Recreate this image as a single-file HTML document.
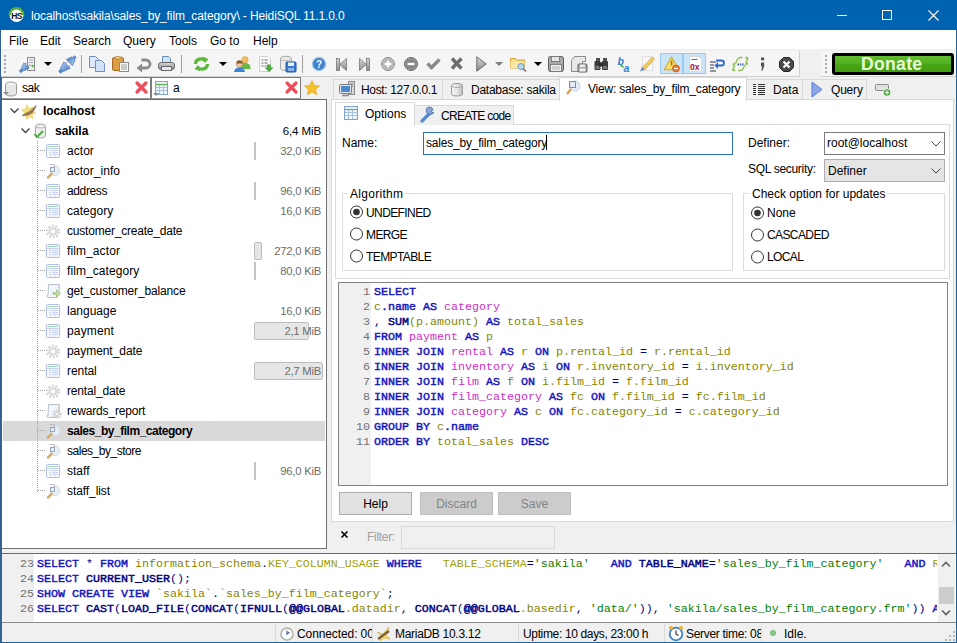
<!DOCTYPE html><html><head><meta charset="utf-8"><style>
*{box-sizing:border-box;margin:0;padding:0}
html,body{width:957px;height:643px;overflow:hidden;background:#f0f0f0;font-family:"Liberation Sans",sans-serif;font-size:12px;color:#000}
.a{position:absolute}
.t{position:absolute;white-space:nowrap;line-height:14px}
svg{position:absolute;overflow:visible}
.m{font-family:"Liberation Mono",monospace;font-size:11.67px;line-height:15px;white-space:pre;position:absolute}
.kw{color:#1414c0;font-weight:normal;-webkit-text-stroke:0.45px #1414c0}
.id{color:#858500}
.tb{color:#d22cc8}
.st{color:#008000}
.fn{color:#000080;font-weight:normal;-webkit-text-stroke:0.45px #000080}
.sy{color:#000080}
.id2{color:#a0a000}

</style></head><body>
<div class="a" style="left:0;top:0;width:957px;height:30px;background:#0063b1"></div>
<svg style="left:9px;top:7px" width="16" height="16"><circle cx="7.5" cy="8" r="7" fill="#fff"/><path d="M0.8 8a6.7 6.7 0 0 1 13.4 0" fill="none" stroke="#5cb030" stroke-width="2.4"/><circle cx="7.5" cy="8.8" r="5.2" fill="#fff"/><text x="7.6" y="11.8" font-family="Liberation Sans" font-weight="bold" font-size="8.5" text-anchor="middle" fill="#111" letter-spacing="-0.6">HS</text></svg>
<div class="t" style="left:31px;top:9px;color:#fff;font-size:12px;letter-spacing:-0.12px">localhost\sakila\sales_by_film_category\ - HeidiSQL 11.1.0.0</div>
<div class="a" style="left:837px;top:15px;width:10px;height:1px;background:#fff"></div>
<div class="a" style="left:882px;top:10px;width:10px;height:10px;border:1px solid #fff"></div>
<svg style="left:928px;top:10px" width="11" height="11"><path d="M0.5 0.5L10.5 10.5M10.5 0.5L0.5 10.5" stroke="#fff" stroke-width="1.1"/></svg>
<div class="a" style="left:0;top:30px;width:1px;height:613px;background:#2f6090;z-index:5"></div><div class="a" style="left:1px;top:77px;width:1px;height:566px;background:#3a6a92;z-index:5"></div>
<div class="a" style="left:956px;top:30px;width:1px;height:613px;background:#1f5f98;z-index:5"></div>
<div class="a" style="left:1px;top:30px;width:955px;height:19px;background:#fff"></div>
<div class="t" style="left:9px;top:34px">File</div>
<div class="t" style="left:40px;top:34px">Edit</div>
<div class="t" style="left:73px;top:34px">Search</div>
<div class="t" style="left:123px;top:34px">Query</div>
<div class="t" style="left:169px;top:34px">Tools</div>
<div class="t" style="left:210px;top:34px">Go to</div>
<div class="t" style="left:253px;top:34px">Help</div>
<div class="a" style="left:1px;top:49px;width:955px;height:2px;background:#f0f0f0"></div>
<div class="a" style="left:1px;top:51px;width:799px;height:26px;background:#f5f5f5;border-right:1px solid #d0d0d0;border-bottom:1px solid #d0d0d0"></div>
<div class="a" style="left:821px;top:51px;width:135px;height:26px;background:#f5f5f5;border-bottom:1px solid #d0d0d0"></div>
<div class="a" style="left:4px;top:55px;width:2px;height:2px;background:#a8a8a8"></div>
<div class="a" style="left:4px;top:59px;width:2px;height:2px;background:#a8a8a8"></div>
<div class="a" style="left:4px;top:63px;width:2px;height:2px;background:#a8a8a8"></div>
<div class="a" style="left:4px;top:67px;width:2px;height:2px;background:#a8a8a8"></div>
<div class="a" style="left:4px;top:71px;width:2px;height:2px;background:#a8a8a8"></div>
<div class="a" style="left:825px;top:55px;width:2px;height:2px;background:#a8a8a8"></div>
<div class="a" style="left:825px;top:59px;width:2px;height:2px;background:#a8a8a8"></div>
<div class="a" style="left:825px;top:63px;width:2px;height:2px;background:#a8a8a8"></div>
<div class="a" style="left:825px;top:67px;width:2px;height:2px;background:#a8a8a8"></div>
<div class="a" style="left:825px;top:71px;width:2px;height:2px;background:#a8a8a8"></div>
<div class="a" style="left:81px;top:55px;width:1px;height:18px;background:#a0a0a0"></div>
<div class="a" style="left:181px;top:55px;width:1px;height:18px;background:#a0a0a0"></div>
<div class="a" style="left:302px;top:55px;width:1px;height:18px;background:#a0a0a0"></div>
<svg style="left:0;top:0" width="0" height="0"><defs><linearGradient id="plg" x1="0" y1="0" x2="0" y2="1"><stop offset="0" stop-color="#a9c8f0"/><stop offset="1" stop-color="#4f82c8"/></linearGradient><linearGradient id="gry" x1="0" y1="0" x2="0" y2="1"><stop offset="0" stop-color="#d8d8d8"/><stop offset="1" stop-color="#8a8a8a"/></linearGradient><linearGradient id="grn" x1="0" y1="0" x2="0" y2="1"><stop offset="0" stop-color="#9ad56a"/><stop offset="1" stop-color="#3f9a2a"/></linearGradient></defs></svg>
<svg style="left:14px;top:56px" width="22" height="16"><rect x="13.5" y="1.5" width="7" height="13" fill="#f4f4f4" stroke="#8a8a8a"/><path d="M15 4h4M15 6.5h4M15 9h2" stroke="#8a9aaa" stroke-width="0.9"/><circle cx="18.5" cy="10" r="1.2" fill="#52b043"/><g transform="translate(10.5 11.5) rotate(-45) scale(0.85)"><rect x="-7.5" y="-1.6" width="4.5" height="3.2" rx="1" fill="#5a8ad0" stroke="#3a64a8" stroke-width="0.5"/><path d="M-3.5 -2.2L3.5 -4.4V4.4L-3.5 2.2z" fill="url(#plg)" stroke="#3f6fb8" stroke-width="0.6"/><rect x="3.5" y="-3" width="2" height="1.6" fill="#999"/><rect x="3.5" y="1.4" width="2" height="1.6" fill="#999"/></g></svg>
<svg style="left:44px;top:62px" width="8" height="5"><path d="M0 0H8L4 4Z" fill="#000"/></svg>
<svg style="left:56px;top:56px" width="22" height="16"><g transform="translate(8.5 11.5) rotate(-45)"><rect x="-7" y="-1.6" width="4" height="3.2" rx="1" fill="#5a8ad0" stroke="#3a64a8" stroke-width="0.5"/><path d="M-3.5 -2.2L3.5 -4.6V4.6L-3.5 2.2z" fill="url(#plg)" stroke="#3f6fb8" stroke-width="0.6"/><rect x="3.5" y="-3" width="1.8" height="1.6" fill="#aaa"/><rect x="3.5" y="1.4" width="1.8" height="1.6" fill="#aaa"/></g><g transform="translate(15.5 4.5) rotate(135)"><path d="M-3 -2.2L3 -4.4V4.4L-3 2.2z" fill="url(#plg)" stroke="#3f6fb8" stroke-width="0.6"/><rect x="-6" y="-1.6" width="3" height="3.2" rx="1" fill="#5a8ad0"/></g></svg>
<svg style="left:89px;top:56px" width="18" height="16"><path d="M0.5 0.5h6l3 3v8h-9z" fill="#dce9fa" stroke="#6e90c0"/><path d="M6.5 4.5h6l3 3v8h-9z" fill="#d2e3f8" stroke="#6e90c0"/></svg>
<svg style="left:112px;top:56px" width="18" height="16"><rect x="0.5" y="1.5" width="11" height="13" rx="1.5" fill="#dd9d45" stroke="#a86b22"/><rect x="3" y="0.5" width="6" height="2.5" rx="1" fill="#f5d070" stroke="#a07030" stroke-width="0.6"/><rect x="7.5" y="6.5" width="9" height="9" fill="#f6f6f6" stroke="#8a8a8a"/><path d="M9 9h6M9 11h6M9 13h6" stroke="#a0a0a0"/></svg>
<svg style="left:136px;top:56px" width="16" height="16"><path d="M5.5 4h4.5a4 4 0 0 1 0 8H5" fill="none" stroke="#8a8a8a" stroke-width="2.8"/><path d="M0.5 12l5.5-4.5v9z" fill="#8a8a8a"/></svg>
<svg style="left:158px;top:56px" width="18" height="16"><path d="M4.5 0.5h6l2 2v4h-8z" fill="#cfe2f7" stroke="#6a8db5"/><rect x="0.5" y="6.5" width="16" height="7" rx="2.5" fill="url(#gry)" stroke="#6a6a6a"/><rect x="3.5" y="10.5" width="10" height="4" fill="#dfe8f2" stroke="#6a6a6a"/></svg>
<svg style="left:193px;top:56px" width="18" height="16"><path d="M2.5 8a5.5 5 0 0 1 10-3" fill="none" stroke="#5cb83a" stroke-width="3.2"/><path d="M14.5 8a5.5 5 0 0 1-10 3" fill="none" stroke="#5cb83a" stroke-width="3.2"/><path d="M9.5 0.5l6 2.5-3.5 4z M7.5 15.5l-6-2.5 3.5-4z" fill="#5cb83a"/></svg>
<svg style="left:219px;top:62px" width="8" height="5"><path d="M0 0H8L4 4Z" fill="#000"/></svg>
<svg style="left:234px;top:56px" width="18" height="16"><circle cx="11" cy="3.8" r="3.2" fill="#f0c060" stroke="#c9943a" stroke-width="0.5"/><path d="M5.5 11.5a5.5 4.5 0 0 1 11 0v1.5h-11z" fill="#62b843"/><circle cx="5.5" cy="8.2" r="3.2" fill="#f0c8a0" stroke="#9a6a3a" stroke-width="0.5"/><path d="M2.3 7.5a3.2 3.2 0 0 1 6.4 0z" fill="#8a5a30"/><path d="M0 16a5.5 4.5 0 0 1 11 0z" fill="#3f86d8"/></svg>
<svg style="left:259px;top:56px" width="17" height="16"><path d="M0.5 0.5h8l3 3v12h-11z" fill="#fafafa" stroke="#d0d0d0"/><path d="M2.5 4h2M5.5 4h3M2.5 7h2M5.5 7h3M2.5 10h2M5.5 10h2" stroke="#606870"/><path d="M8 8.5h4v3h2.5l-4.5 4.5-4.5-4.5h2.5z" fill="#4aa83c"/></svg>
<svg style="left:280px;top:56px" width="17" height="16"><path d="M0.5 2.5a5.5 2.2 0 0 1 11 0v10a5.5 2.2 0 0 1-11 0z" fill="#ececec" stroke="#a8a8a8"/><path d="M0.5 2.5a5.5 2.2 0 0 0 11 0" fill="none" stroke="#b8b8b8"/><rect x="6" y="6" width="10" height="10" rx="1" fill="#3a7cd0" stroke="#1f559f"/><rect x="8" y="6.5" width="6" height="3.5" fill="#e8f0fa"/><rect x="8" y="12" width="6" height="3" fill="#8ab8e8"/></svg>
<svg style="left:312px;top:57px" width="16" height="16"><circle cx="7" cy="7" r="6.6" fill="#4a88d0" stroke="#9cc0ea" stroke-width="1.2"/><circle cx="7" cy="7" r="5.3" fill="#3f7fc8"/><text x="7" y="10.8" font-family="Liberation Sans" font-weight="bold" font-size="10" text-anchor="middle" fill="#fff">?</text></svg>
<svg style="left:336px;top:57px" width="16" height="16"><rect x="0.5" y="1.5" width="3" height="12" fill="url(#gry)" stroke="#6a6a6a" stroke-width="0.7"/><path d="M10.5 1.5v12L3.5 7.5z" fill="url(#gry)" stroke="#6a6a6a" stroke-width="0.7"/></svg>
<svg style="left:359px;top:57px" width="16" height="16"><rect x="7.5" y="1.5" width="3" height="12" fill="url(#gry)" stroke="#6a6a6a" stroke-width="0.7"/><path d="M0.5 1.5v12L7.5 7.5z" fill="url(#gry)" stroke="#6a6a6a" stroke-width="0.7"/></svg>
<svg style="left:381px;top:57px" width="16" height="16"><circle cx="7" cy="7" r="6.5" fill="#c8c8c8" stroke="#8a8a8a"/><circle cx="7" cy="7" r="5" fill="#b0b0b0"/><path d="M7 3.5v7M3.5 7h7" stroke="#fff" stroke-width="2.4"/></svg>
<svg style="left:404px;top:57px" width="16" height="16"><circle cx="7" cy="7" r="6.5" fill="#9a9a9a" stroke="#6a6a6a"/><circle cx="7" cy="7" r="5" fill="#858585"/><path d="M3.5 7h7" stroke="#fff" stroke-width="2.4"/></svg>
<svg style="left:426px;top:57px" width="16" height="16"><path d="M1.5 6.5l4 4 8-8" fill="none" stroke="#8a8a8a" stroke-width="3.4"/></svg>
<svg style="left:450px;top:57px" width="16" height="16"><path d="M2 1.5l9.5 10M11.5 1.5L2 11.5" stroke="#6e6e6e" stroke-width="3.4"/></svg>
<svg style="left:476px;top:56px" width="16" height="16"><path d="M0.8 0.8v14.4L10.2 8z" fill="url(#gry)" stroke="#5a5a5a" stroke-width="0.9"/></svg>
<svg style="left:495px;top:62px" width="8" height="5"><path d="M0 0H8L4 4Z" fill="#7a7a7a"/></svg>
<svg style="left:510px;top:56px" width="17" height="16"><path d="M0.5 2.5h5l1.5 1.5h7.5v8h-14z" fill="#f9db82" stroke="#d2a23a"/><path d="M0.5 5.5h14v6.5h-14z" fill="#fbe7a8"/><circle cx="11" cy="10.5" r="3" fill="#b8d8f4" stroke="#6a9ac8"/><path d="M13 12.5l3 3" stroke="#6a6a6a" stroke-width="1.4"/></svg>
<svg style="left:534px;top:62px" width="8" height="5"><path d="M0 0H8L4 4Z" fill="#000"/></svg>
<svg style="left:548px;top:56px" width="16" height="16"><rect x="0.5" y="0.5" width="15" height="15" rx="2" fill="#a8a8a8" stroke="#5f5f5f"/><rect x="3.5" y="0.5" width="8" height="5" fill="#e6e6e6" stroke="#6f6f6f" stroke-width="0.8"/><rect x="2.5" y="8.5" width="11" height="7" fill="#f0f0f0" stroke="#6f6f6f" stroke-width="0.8"/><path d="M4 11h8M4 13h8" stroke="#b0b0b0"/></svg>
<svg style="left:571px;top:56px" width="17" height="16"><path d="M3.5 0.5h11v5h-3v10h-11v-11z" fill="#e8e8e8" stroke="#8a8a8a"/><rect x="7" y="8" width="9" height="8" rx="1" fill="#a8a8a8" stroke="#5f5f5f"/><rect x="9" y="8.5" width="5" height="2.5" fill="#eee"/><rect x="8.5" y="12.5" width="6" height="3" fill="#eee"/></svg>
<svg style="left:594px;top:56px" width="16" height="16"><rect x="2" y="2" width="4" height="4" fill="#505050"/><rect x="9" y="2" width="4" height="4" fill="#505050"/><rect x="0.5" y="5" width="6" height="9" rx="1" fill="#3a3a3a"/><rect x="8" y="5" width="6" height="9" rx="1" fill="#3a3a3a"/><rect x="5" y="6.5" width="4" height="4" fill="#2a2a2a"/><rect x="1.5" y="10" width="4" height="3" fill="#777"/><rect x="9" y="10" width="4" height="3" fill="#777"/></svg>
<svg style="left:617px;top:56px" width="17" height="16"><text x="0.5" y="8.5" font-family="Liberation Sans" font-style="italic" font-weight="bold" font-size="10.5" fill="#2a80e0">b</text><text x="6.5" y="15.5" font-family="Liberation Sans" font-style="italic" font-weight="bold" font-size="10.5" fill="#2a80e0">a</text><path d="M3 8.5l3.5 3" stroke="#4aa83c" stroke-width="1.6"/></svg>
<svg style="left:639px;top:56px" width="17" height="16"><rect x="3.5" y="0.5" width="10" height="14" fill="#f8f8f8" stroke="#e0e0e0"/><path d="M1 15.5l2-4.5 3 2.5z" fill="#5a8ad0"/><path d="M3.5 11l10-10 2 2-9.5 10.5z" fill="#f2ca5a" stroke="#c8982a" stroke-width="0.6"/></svg>
<div class="a" style="left:660px;top:53px;width:23px;height:21px;background:#cce4f7;border:1px solid #99c9ef"></div>
<div class="a" style="left:683px;top:53px;width:23px;height:21px;background:#cce4f7;border:1px solid #99c9ef"></div>
<svg style="left:664px;top:56px" width="17" height="17"><path d="M7.5 0.8L14.8 13.8H0.2z" fill="#f8dc6a" stroke="#c9a02a" stroke-linejoin="round"/><rect x="6.8" y="4.5" width="1.6" height="5" fill="#a07810"/><circle cx="12" cy="12.5" r="3.5" fill="#e8732a" stroke="#c45010" stroke-width="0.6"/><path d="M10 12.5h4" stroke="#fff" stroke-width="1.3"/></svg>
<svg style="left:689px;top:56px" width="16" height="16"><path d="M0.5 0.5h9l3 3v12h-12z" fill="#fff" stroke="#d8d8d8"/><path d="M2.5 3.5h6" stroke="#c04060"/><text x="1" y="14" font-family="Liberation Sans" font-weight="bold" font-size="8.5" fill="#a01040">0x</text></svg>
<svg style="left:710px;top:56px" width="15" height="16"><path d="M0 6h6M0 9h4M0 12h4M0 15h6" stroke="#303a48" stroke-width="1.2"/><path d="M6 9.5h5.5a2.5 2.5 0 0 0 0-5H6" fill="none" stroke="#2a6ac8" stroke-width="1.8"/><path d="M4.5 9.5l3.5-3.5v7z" fill="#2a6ac8"/></svg>
<svg style="left:732px;top:56px" width="18" height="16"><g transform="translate(3 0) skewX(-25)"><path d="M8 1.5H6Q4 1.5 4 4V6.5L2 8 4 9.5V12Q4 14.5 6 14.5H7M11 1.5H12Q14 1.5 14 4V6.5L16 8 14 9.5V12Q14 14.5 12 14.5H10" fill="none" stroke="#8cc24a" stroke-width="1.5"/></g><path d="M5.5 8.5h6" stroke="#4a6ab0" stroke-width="1.8" stroke-dasharray="1.5 0.8"/></svg>
<svg style="left:758px;top:56px" width="16" height="16"><rect x="3" y="1.5" width="3.2" height="2.8" fill="#555"/><path d="M3 6.5h3.2v3.5l-1.6 4.5h-1.4l1-4H3z" fill="#555"/></svg>
<svg style="left:779px;top:57px" width="16" height="16"><path d="M4.5 0.5h6l4 4v6l-4 4h-6l-4-4v-6z" fill="#4a4a4a" stroke="#2a2a2a"/><path d="M4.5 4.5l6 6M10.5 4.5l-6 6" stroke="#fff" stroke-width="2.2"/></svg>
<div class="a" style="left:832px;top:53px;width:122px;height:22px;border-radius:3px;background:#000"></div>
<div class="a" style="left:835px;top:56px;width:116px;height:16px;background:linear-gradient(#62bc30 0,#55b022 45%,#47a514 55%,#429f10 100%)"></div>
<div class="t" style="left:861px;top:55px;font-size:17.6px;line-height:18px;font-weight:bold;letter-spacing:0.3px;color:#eafcd4">Donate</div>
<div class="a" style="left:1px;top:77px;width:150px;height:22px;background:#fff;border:1px solid #7a7a7a;border-bottom-color:#9a9a9a"></div>
<div class="a" style="left:151px;top:77px;width:150px;height:22px;background:#fff;border:1px solid #7a7a7a;border-bottom-color:#9a9a9a"></div>
<svg style="left:3px;top:81px" width="16" height="16"><ellipse cx="8" cy="3.5" rx="5.5" ry="2.5" fill="#f4f4f4" stroke="#9a9a9a"/><path d="M2.5 3.5v9a5.5 2.5 0 0 0 11 0v-9" fill="#e6e6e6" stroke="#9a9a9a"/><path d="M0 11l3 3 3-3z" fill="#8a8a8a"/></svg>
<svg style="left:153px;top:81px" width="16" height="16"><rect x="2.5" y="0.5" width="12" height="13" fill="#eef4fb" stroke="#7fa3cf"/><path d="M2.5 3.5h12" stroke="#6cb055" stroke-width="1.4"/><path d="M3 6.5h11M3 9.5h11M6.5 4v9M10.5 4v9" stroke="#a8c2e2"/><path d="M0 12l3 3 3-3z" fill="#8a8a8a"/></svg>
<svg style="left:135px;top:81px" width="13" height="13"><path d="M2 2l9 9M11 2l-9 9" stroke="#ea4f5c" stroke-width="3.2" stroke-linecap="round"/></svg>
<svg style="left:285px;top:81px" width="13" height="13"><path d="M2 2l9 9M11 2l-9 9" stroke="#ea4f5c" stroke-width="3.2" stroke-linecap="round"/></svg>
<div class="t" style="left:22px;top:81px;letter-spacing:-0.4px">sak</div>
<div class="t" style="left:173px;top:81px">a</div>
<svg style="left:304px;top:80px" width="16" height="16"><path d="M8 0.5l2.3 4.9 5.2 0.6-3.9 3.5 1.1 5.2L8 12.1l-4.7 2.6 1.1-5.2L0.5 6l5.2-0.6z" fill="#f5c02a" stroke="#e0a010" stroke-width="0.6"/></svg>
<div class="a" style="left:1px;top:99px;width:326px;height:450px;background:#fff;border:1px solid #707070;border-top-color:#6a6a6a"></div>
<div class="a" style="left:3px;top:421px;width:322px;height:20px;background:#d9d9d9"></div>
<svg style="left:10px;top:108px" width="9" height="6"><path d="M0.5 0.5L4.5 4.5L8.5 0.5" fill="none" stroke="#404040" stroke-width="1.3"/></svg>
<svg style="left:21px;top:128px" width="9" height="6"><path d="M0.5 0.5L4.5 4.5L8.5 0.5" fill="none" stroke="#404040" stroke-width="1.3"/></svg>
<svg style="left:21px;top:103px" width="16" height="16"><path d="M6 1.5l2 4 4-1.5-1 4 4 2-4 1.5 1 4-4-2-2 3-1-4-4 0.5 2.5-3.5-3-3 4-0.5z" fill="#f4e07a" stroke="#e2c860" stroke-width="0.6"/><path d="M1.5 12.5l4-2.5 4-2 3.5-3.5 2-2-1 3-2.5 4-4 2.5z" fill="#9a7a5a" stroke="#7a5a3a" stroke-width="0.6"/></svg>
<div class="t" style="left:43px;top:104px;font-weight:bold;letter-spacing:-0.1px">localhost</div>
<svg style="left:33px;top:123px" width="15" height="16"><path d="M2.5 3a5 2 0 0 1 10 0v10a5 2 0 0 1-10 0z" fill="#eeeeee" stroke="#a8a8a8"/><path d="M2.5 3a5 2 0 0 0 10 0" fill="none" stroke="#b8b8b8"/><path d="M1.5 11l2.5 3 6-6" fill="none" stroke="#52b048" stroke-width="2"/></svg>
<div class="t" style="left:55px;top:124px;font-weight:bold">sakila</div>
<div class="t" style="right:636px;top:124px;font-size:11.5px;letter-spacing:-0.1px">6,4 MiB</div>
<div class="a" style="left:37px;top:141px;width:1px;height:351px;background:repeating-linear-gradient(#a0a0a0 0 1px,transparent 1px 2px)"></div>
<div class="a" style="left:38px;top:150px;width:8px;height:1px;background:repeating-linear-gradient(90deg,#a0a0a0 0 1px,transparent 1px 2px)"></div>
<svg style="left:46px;top:144px" width="14" height="14"><rect x="0.5" y="0.5" width="13" height="13" rx="1.2" fill="#f7f9fe" stroke="#b4bde6"/><path d="M2 2.5h10" stroke="#a8d8b8" stroke-width="1"/><path d="M1 4.5h12" stroke="#c8d2ee"/><path d="M3 6.5h1M6 6.5h3M10 6.5h2M3 8.5h1M6 8.5h3M10 8.5h2M3 10.5h1M6 10.5h3M10 10.5h2" stroke="#c4d0ee" stroke-width="1"/><path d="M4.5 5v8M9.5 5v8" stroke="#dde4f6"/></svg>
<div class="t" style="left:67px;top:144px;letter-spacing:0.046px">actor</div>
<div class="a" style="left:254px;top:142px;width:2px;height:18px;background:#c4c4c4"></div>
<div class="t" style="right:636px;top:144px;font-size:11.3px;letter-spacing:-0.25px;color:#6d6d6d">32,0 KiB</div>
<div class="a" style="left:38px;top:170px;width:8px;height:1px;background:repeating-linear-gradient(90deg,#a0a0a0 0 1px,transparent 1px 2px)"></div>
<svg style="left:46px;top:164px" width="15" height="15"><circle cx="9.2" cy="6.8" r="4.8" fill="#e6eef8" stroke="#d4dcea"/><path d="M3.5 0.5h5v5" fill="none" stroke="#b8bcc4"/><rect x="4.5" y="3.5" width="4" height="4" fill="none" stroke="#9aa4b4"/><path d="M5.5 10L2 13.5" stroke="#d2b070" stroke-width="2.6" stroke-linecap="round"/></svg>
<div class="t" style="left:67px;top:164px;letter-spacing:0.031px">actor_info</div>
<div class="a" style="left:38px;top:190px;width:8px;height:1px;background:repeating-linear-gradient(90deg,#a0a0a0 0 1px,transparent 1px 2px)"></div>
<svg style="left:46px;top:184px" width="14" height="14"><rect x="0.5" y="0.5" width="13" height="13" rx="1.2" fill="#f7f9fe" stroke="#b4bde6"/><path d="M2 2.5h10" stroke="#a8d8b8" stroke-width="1"/><path d="M1 4.5h12" stroke="#c8d2ee"/><path d="M3 6.5h1M6 6.5h3M10 6.5h2M3 8.5h1M6 8.5h3M10 8.5h2M3 10.5h1M6 10.5h3M10 10.5h2" stroke="#c4d0ee" stroke-width="1"/><path d="M4.5 5v8M9.5 5v8" stroke="#dde4f6"/></svg>
<div class="t" style="left:67px;top:184px;letter-spacing:-0.37px">address</div>
<div class="a" style="left:254px;top:182px;width:2px;height:18px;background:#c4c4c4"></div>
<div class="t" style="right:636px;top:184px;font-size:11.3px;letter-spacing:-0.25px;color:#6d6d6d">96,0 KiB</div>
<div class="a" style="left:38px;top:210px;width:8px;height:1px;background:repeating-linear-gradient(90deg,#a0a0a0 0 1px,transparent 1px 2px)"></div>
<svg style="left:46px;top:204px" width="14" height="14"><rect x="0.5" y="0.5" width="13" height="13" rx="1.2" fill="#f7f9fe" stroke="#b4bde6"/><path d="M2 2.5h10" stroke="#a8d8b8" stroke-width="1"/><path d="M1 4.5h12" stroke="#c8d2ee"/><path d="M3 6.5h1M6 6.5h3M10 6.5h2M3 8.5h1M6 8.5h3M10 8.5h2M3 10.5h1M6 10.5h3M10 10.5h2" stroke="#c4d0ee" stroke-width="1"/><path d="M4.5 5v8M9.5 5v8" stroke="#dde4f6"/></svg>
<div class="t" style="left:67px;top:204px;letter-spacing:0.036px">category</div>
<div class="t" style="right:636px;top:204px;font-size:11.3px;letter-spacing:-0.25px;color:#6d6d6d">16,0 KiB</div>
<div class="a" style="left:38px;top:230px;width:8px;height:1px;background:repeating-linear-gradient(90deg,#a0a0a0 0 1px,transparent 1px 2px)"></div>
<svg style="left:45px;top:224px" width="16" height="16"><g transform="translate(8 7.5)"><circle r="5.6" fill="none" stroke="#d6d6d6" stroke-width="3" stroke-dasharray="1.9 1.6"/><circle r="4.3" fill="#dcdcdc"/><circle r="2" fill="#fff"/></g></svg>
<div class="t" style="left:67px;top:224px;letter-spacing:-0.209px">customer_create_date</div>
<div class="a" style="left:38px;top:250px;width:8px;height:1px;background:repeating-linear-gradient(90deg,#a0a0a0 0 1px,transparent 1px 2px)"></div>
<svg style="left:46px;top:244px" width="14" height="14"><rect x="0.5" y="0.5" width="13" height="13" rx="1.2" fill="#f7f9fe" stroke="#b4bde6"/><path d="M2 2.5h10" stroke="#a8d8b8" stroke-width="1"/><path d="M1 4.5h12" stroke="#c8d2ee"/><path d="M3 6.5h1M6 6.5h3M10 6.5h2M3 8.5h1M6 8.5h3M10 8.5h2M3 10.5h1M6 10.5h3M10 10.5h2" stroke="#c4d0ee" stroke-width="1"/><path d="M4.5 5v8M9.5 5v8" stroke="#dde4f6"/></svg>
<div class="t" style="left:67px;top:244px;letter-spacing:0.098px">film_actor</div>
<div class="a" style="left:254px;top:242px;width:8px;height:18px;background:#e6e6e6;border:1px solid #bcbcbc;border-radius:2px"></div>
<div class="t" style="right:636px;top:244px;font-size:11.3px;letter-spacing:-0.25px;color:#6d6d6d">272,0 KiB</div>
<div class="a" style="left:38px;top:270px;width:8px;height:1px;background:repeating-linear-gradient(90deg,#a0a0a0 0 1px,transparent 1px 2px)"></div>
<svg style="left:46px;top:264px" width="14" height="14"><rect x="0.5" y="0.5" width="13" height="13" rx="1.2" fill="#f7f9fe" stroke="#b4bde6"/><path d="M2 2.5h10" stroke="#a8d8b8" stroke-width="1"/><path d="M1 4.5h12" stroke="#c8d2ee"/><path d="M3 6.5h1M6 6.5h3M10 6.5h2M3 8.5h1M6 8.5h3M10 8.5h2M3 10.5h1M6 10.5h3M10 10.5h2" stroke="#c4d0ee" stroke-width="1"/><path d="M4.5 5v8M9.5 5v8" stroke="#dde4f6"/></svg>
<div class="t" style="left:67px;top:264px;letter-spacing:0.08px">film_category</div>
<div class="a" style="left:254px;top:262px;width:2px;height:18px;background:#c4c4c4"></div>
<div class="t" style="right:636px;top:264px;font-size:11.3px;letter-spacing:-0.25px;color:#6d6d6d">80,0 KiB</div>
<div class="a" style="left:38px;top:290px;width:8px;height:1px;background:repeating-linear-gradient(90deg,#a0a0a0 0 1px,transparent 1px 2px)"></div>
<svg style="left:46px;top:283px" width="16" height="16"><path d="M2.5 1.5h9a1.5 2 0 0 1 1.5 2v8.5h-2v2.5h-9a1.5 1.5 0 0 1-1-1.5v-0.5h1z" fill="#f2f6fb" stroke="#b8c0cc"/><path d="M11.5 1.5a1.5 1.5 0 0 1 2 2v2" fill="none" stroke="#b8c0cc"/><path d="M7 9.5h3.5v-2.5l4 3.5-4 3.5v-2.5H7z" fill="#c6e4a8" stroke="#98b878" stroke-width="0.7"/></svg>
<div class="t" style="left:67px;top:284px;letter-spacing:-0.15px">get_customer_balance</div>
<div class="a" style="left:38px;top:310px;width:8px;height:1px;background:repeating-linear-gradient(90deg,#a0a0a0 0 1px,transparent 1px 2px)"></div>
<svg style="left:46px;top:304px" width="14" height="14"><rect x="0.5" y="0.5" width="13" height="13" rx="1.2" fill="#f7f9fe" stroke="#b4bde6"/><path d="M2 2.5h10" stroke="#a8d8b8" stroke-width="1"/><path d="M1 4.5h12" stroke="#c8d2ee"/><path d="M3 6.5h1M6 6.5h3M10 6.5h2M3 8.5h1M6 8.5h3M10 8.5h2M3 10.5h1M6 10.5h3M10 10.5h2" stroke="#c4d0ee" stroke-width="1"/><path d="M4.5 5v8M9.5 5v8" stroke="#dde4f6"/></svg>
<div class="t" style="left:67px;top:304px;letter-spacing:-0.009px">language</div>
<div class="t" style="right:636px;top:304px;font-size:11.3px;letter-spacing:-0.25px;color:#6d6d6d">16,0 KiB</div>
<div class="a" style="left:38px;top:330px;width:8px;height:1px;background:repeating-linear-gradient(90deg,#a0a0a0 0 1px,transparent 1px 2px)"></div>
<svg style="left:46px;top:324px" width="14" height="14"><rect x="0.5" y="0.5" width="13" height="13" rx="1.2" fill="#f7f9fe" stroke="#b4bde6"/><path d="M2 2.5h10" stroke="#a8d8b8" stroke-width="1"/><path d="M1 4.5h12" stroke="#c8d2ee"/><path d="M3 6.5h1M6 6.5h3M10 6.5h2M3 8.5h1M6 8.5h3M10 8.5h2M3 10.5h1M6 10.5h3M10 10.5h2" stroke="#c4d0ee" stroke-width="1"/><path d="M4.5 5v8M9.5 5v8" stroke="#dde4f6"/></svg>
<div class="t" style="left:67px;top:324px;letter-spacing:0.141px">payment</div>
<div class="a" style="left:254px;top:322px;width:55px;height:18px;background:#e6e6e6;border:1px solid #bcbcbc;border-radius:2px"></div>
<div class="t" style="right:636px;top:324px;font-size:11.3px;letter-spacing:-0.25px;color:#6d6d6d">2,1 MiB</div>
<div class="a" style="left:38px;top:350px;width:8px;height:1px;background:repeating-linear-gradient(90deg,#a0a0a0 0 1px,transparent 1px 2px)"></div>
<svg style="left:45px;top:344px" width="16" height="16"><g transform="translate(8 7.5)"><circle r="5.6" fill="none" stroke="#d6d6d6" stroke-width="3" stroke-dasharray="1.9 1.6"/><circle r="4.3" fill="#dcdcdc"/><circle r="2" fill="#fff"/></g></svg>
<div class="t" style="left:67px;top:344px;letter-spacing:-0.053px">payment_date</div>
<div class="a" style="left:38px;top:370px;width:8px;height:1px;background:repeating-linear-gradient(90deg,#a0a0a0 0 1px,transparent 1px 2px)"></div>
<svg style="left:46px;top:364px" width="14" height="14"><rect x="0.5" y="0.5" width="13" height="13" rx="1.2" fill="#f7f9fe" stroke="#b4bde6"/><path d="M2 2.5h10" stroke="#a8d8b8" stroke-width="1"/><path d="M1 4.5h12" stroke="#c8d2ee"/><path d="M3 6.5h1M6 6.5h3M10 6.5h2M3 8.5h1M6 8.5h3M10 8.5h2M3 10.5h1M6 10.5h3M10 10.5h2" stroke="#c4d0ee" stroke-width="1"/><path d="M4.5 5v8M9.5 5v8" stroke="#dde4f6"/></svg>
<div class="t" style="left:67px;top:364px;letter-spacing:-0.053px">rental</div>
<div class="a" style="left:254px;top:362px;width:69px;height:18px;background:#e6e6e6;border:1px solid #bcbcbc;border-radius:2px"></div>
<div class="t" style="right:636px;top:364px;font-size:11.3px;letter-spacing:-0.25px;color:#6d6d6d">2,7 MiB</div>
<div class="a" style="left:38px;top:390px;width:8px;height:1px;background:repeating-linear-gradient(90deg,#a0a0a0 0 1px,transparent 1px 2px)"></div>
<svg style="left:45px;top:384px" width="16" height="16"><g transform="translate(8 7.5)"><circle r="5.6" fill="none" stroke="#d6d6d6" stroke-width="3" stroke-dasharray="1.9 1.6"/><circle r="4.3" fill="#dcdcdc"/><circle r="2" fill="#fff"/></g></svg>
<div class="t" style="left:67px;top:384px;letter-spacing:-0.166px">rental_date</div>
<div class="a" style="left:38px;top:410px;width:8px;height:1px;background:repeating-linear-gradient(90deg,#a0a0a0 0 1px,transparent 1px 2px)"></div>
<svg style="left:46px;top:403px" width="16" height="16"><path d="M2.5 1.5h9a1.5 2 0 0 1 1.5 2v8.5h-2v2.5h-9a1.5 1.5 0 0 1-1-1.5v-0.5h1z" fill="#f2f6fb" stroke="#b8c0cc"/><path d="M11.5 1.5a1.5 1.5 0 0 1 2 2v2" fill="none" stroke="#b8c0cc"/><g transform="translate(11 11)"><circle r="3.6" fill="none" stroke="#c8c8c8" stroke-width="2" stroke-dasharray="1.4 1.2"/><circle r="2.4" fill="#d8d8d8"/><circle r="1" fill="#fff"/></g></svg>
<div class="t" style="left:67px;top:404px;letter-spacing:-0.179px">rewards_report</div>
<div class="a" style="left:38px;top:430px;width:8px;height:1px;background:repeating-linear-gradient(90deg,#a0a0a0 0 1px,transparent 1px 2px)"></div>
<svg style="left:46px;top:424px" width="15" height="15"><circle cx="9.2" cy="6.8" r="4.8" fill="#e6eef8" stroke="#d4dcea"/><path d="M3.5 0.5h5v5" fill="none" stroke="#b8bcc4"/><rect x="4.5" y="3.5" width="4" height="4" fill="none" stroke="#9aa4b4"/><path d="M5.5 10L2 13.5" stroke="#d2b070" stroke-width="2.6" stroke-linecap="round"/></svg>
<div class="t" style="left:67px;top:424px;font-weight:bold;letter-spacing:-0.467px">sales_by_film_category</div>
<div class="a" style="left:38px;top:450px;width:8px;height:1px;background:repeating-linear-gradient(90deg,#a0a0a0 0 1px,transparent 1px 2px)"></div>
<svg style="left:46px;top:444px" width="15" height="15"><circle cx="9.2" cy="6.8" r="4.8" fill="#e6eef8" stroke="#d4dcea"/><path d="M3.5 0.5h5v5" fill="none" stroke="#b8bcc4"/><rect x="4.5" y="3.5" width="4" height="4" fill="none" stroke="#9aa4b4"/><path d="M5.5 10L2 13.5" stroke="#d2b070" stroke-width="2.6" stroke-linecap="round"/></svg>
<div class="t" style="left:67px;top:444px;letter-spacing:-0.479px">sales_by_store</div>
<div class="a" style="left:38px;top:470px;width:8px;height:1px;background:repeating-linear-gradient(90deg,#a0a0a0 0 1px,transparent 1px 2px)"></div>
<svg style="left:46px;top:464px" width="14" height="14"><rect x="0.5" y="0.5" width="13" height="13" rx="1.2" fill="#f7f9fe" stroke="#b4bde6"/><path d="M2 2.5h10" stroke="#a8d8b8" stroke-width="1"/><path d="M1 4.5h12" stroke="#c8d2ee"/><path d="M3 6.5h1M6 6.5h3M10 6.5h2M3 8.5h1M6 8.5h3M10 8.5h2M3 10.5h1M6 10.5h3M10 10.5h2" stroke="#c4d0ee" stroke-width="1"/><path d="M4.5 5v8M9.5 5v8" stroke="#dde4f6"/></svg>
<div class="t" style="left:67px;top:464px;letter-spacing:0.013px">staff</div>
<div class="a" style="left:254px;top:462px;width:2px;height:18px;background:#c4c4c4"></div>
<div class="t" style="right:636px;top:464px;font-size:11.3px;letter-spacing:-0.25px;color:#6d6d6d">96,0 KiB</div>
<div class="a" style="left:38px;top:490px;width:8px;height:1px;background:repeating-linear-gradient(90deg,#a0a0a0 0 1px,transparent 1px 2px)"></div>
<svg style="left:46px;top:484px" width="15" height="15"><circle cx="9.2" cy="6.8" r="4.8" fill="#e6eef8" stroke="#d4dcea"/><path d="M3.5 0.5h5v5" fill="none" stroke="#b8bcc4"/><rect x="4.5" y="3.5" width="4" height="4" fill="none" stroke="#9aa4b4"/><path d="M5.5 10L2 13.5" stroke="#d2b070" stroke-width="2.6" stroke-linecap="round"/></svg>
<div class="t" style="left:67px;top:484px;letter-spacing:-0.078px">staff_list</div>
<div class="a" style="left:331px;top:99px;width:623px;height:423px;background:#fff;border:1px solid #d9d9d9"></div>
<div class="a" style="left:333px;top:79px;width:110px;height:20px;background:#f0f0f0;border:1px solid #d9d9d9;border-bottom:none"></div>
<div class="a" style="left:442px;top:79px;width:118px;height:20px;background:#f0f0f0;border:1px solid #d9d9d9;border-bottom:none"></div>
<div class="a" style="left:746px;top:79px;width:57px;height:20px;background:#f0f0f0;border:1px solid #d9d9d9;border-bottom:none"></div>
<div class="a" style="left:802px;top:79px;width:65px;height:20px;background:#f0f0f0;border:1px solid #d9d9d9;border-bottom:none"></div>
<div class="a" style="left:559px;top:77px;width:188px;height:24px;background:#fff;border:1px solid #d9d9d9;border-bottom:none"></div>
<svg style="left:339px;top:81px" width="16" height="16"><rect x="9.5" y="0.5" width="6" height="13" fill="#d8d8d8" stroke="#8a8a8a"/><path d="M11 3h3M11 5h3" stroke="#777"/><rect x="0.5" y="3.5" width="12" height="9" rx="1" fill="#e8e8e8" stroke="#7a7a7a"/><rect x="2" y="5" width="9" height="6" fill="#4a88d0"/><path d="M3 14.5h7" stroke="#8a8a8a" stroke-width="1.6"/></svg>
<div class="t" style="left:361px;top:83px;letter-spacing:-0.35px">Host: 127.0.0.1</div>
<svg style="left:451px;top:83px" width="13" height="14"><defs><linearGradient id="dbg" x1="0" x2="1"><stop offset="0" stop-color="#f8f8f8"/><stop offset="0.6" stop-color="#e0e0e0"/><stop offset="1" stop-color="#b8b8b8"/></linearGradient></defs><path d="M0.5 2.5a5.5 2 0 0 1 11 0v8.5a5.5 2 0 0 1-11 0z" fill="url(#dbg)" stroke="#9a9a9a"/><path d="M0.5 2.5a5.5 2 0 0 0 11 0" fill="none" stroke="#aaa"/></svg>
<div class="t" style="left:471px;top:83px;letter-spacing:-0.25px">Database: sakila</div>
<svg style="left:566px;top:80px" width="16" height="16"><circle cx="9" cy="6" r="5" fill="#e4ecf6" stroke="#c8d4e4"/><rect x="3.5" y="1.5" width="6" height="6" fill="none" stroke="#7a90ac"/><path d="M5 9L1 14" stroke="#d7a04a" stroke-width="2.4"/></svg>
<div class="t" style="left:588px;top:82px;letter-spacing:-0.2px">View: sales_by_film_category</div>
<svg style="left:753px;top:83px" width="13" height="13"><path d="M0 1.5h3M5 1.5h7M0 3.5h3M5 3.5h7M0 5.5h3M5 5.5h7M0 7.5h3M5 7.5h7M0 9.5h3M5 9.5h7M0 11.5h3M5 11.5h7" stroke="#303030" stroke-width="1"/></svg>
<div class="t" style="left:773px;top:83px">Data</div>
<svg style="left:811px;top:81px" width="12" height="17"><path d="M1 1v15l10-7.5z" fill="#8aa8e8" stroke="#5a7ad0"/></svg>
<div class="t" style="left:831px;top:83px;letter-spacing:-0.2px">Query</div>
<svg style="left:875px;top:82px" width="17" height="15"><rect x="0.5" y="2.5" width="13" height="6" rx="1" fill="#e0e0e0" stroke="#8a8a8a"/><circle cx="12" cy="10.5" r="3.8" fill="#4aa83c" stroke="#fff" stroke-width="0.8"/><path d="M12 8.5v4M10 10.5h4" stroke="#fff" stroke-width="1.2"/></svg>
<div class="a" style="left:335px;top:124px;width:615px;height:155px;background:#fff;border:1px solid #d9d9d9"></div>
<div class="a" style="left:414px;top:105px;width:100px;height:20px;background:#f0f0f0;border:1px solid #d9d9d9;border-bottom:none"></div>
<div class="a" style="left:335px;top:102px;width:80px;height:24px;background:#fff;border:1px solid #d9d9d9;border-bottom:none"></div>
<svg style="left:344px;top:106px" width="14" height="14"><rect x="0.5" y="0.5" width="13" height="13" fill="#eef4fb" stroke="#7fa3cf"/><path d="M1 3.5h12" stroke="#6cb055" stroke-width="1.2"/><path d="M1 6.5h12M1 9.5h12M4.5 4v9M8.5 4v9" stroke="#a8c2e2"/></svg>
<div class="t" style="left:365px;top:107px">Options</div>
<svg style="left:420px;top:107px" width="16" height="16"><path d="M2 14l7-7" stroke="#5a88d0" stroke-width="3.2" stroke-linecap="round"/><path d="M9 7a3.5 3.5 0 1 1 4-4l-2 1 1 2 2-1a3.5 3.5 0 0 1-5 2z" fill="#8aa8d8" stroke="#4a6aa0" stroke-width="0.8"/></svg>
<div class="t" style="left:441px;top:109px;letter-spacing:-0.7px">CREATE code</div>
<div class="t" style="left:342px;top:136px">Name:</div>
<div class="a" style="left:423px;top:132px;width:310px;height:23px;background:#fff;border:1px solid #2a72bc"></div>
<div class="t" style="left:426px;top:136px;letter-spacing:-0.2px">sales_by_film_category</div>
<div class="a" style="left:546px;top:135px;width:1px;height:15px;background:#000"></div>
<div class="t" style="left:748px;top:136px">Definer:</div>
<div class="t" style="left:748px;top:162px;letter-spacing:-0.3px">SQL security:</div>
<div class="a" style="left:824px;top:132px;width:121px;height:23px;background:#fff;border:1px solid #7a7a7a"></div>
<div class="t" style="left:827px;top:136px">root@localhost</div>
<div class="a" style="left:824px;top:159px;width:121px;height:23px;background:#e5e5e5;border:1px solid #adadad"></div>
<div class="t" style="left:828px;top:164px">Definer</div>
<svg style="left:931px;top:141px" width="10" height="6"><path d="M0.5 0.5L5 5L9.5 0.5" fill="none" stroke="#404040" stroke-width="1"/></svg>
<svg style="left:931px;top:168px" width="10" height="6"><path d="M0.5 0.5L5 5L9.5 0.5" fill="none" stroke="#404040" stroke-width="1"/></svg>
<div class="a" style="left:342px;top:193px;width:391px;height:78px;border:1px solid #dcdcdc"></div>
<div class="t" style="left:348px;top:187px;background:#fff;padding:0 2px;letter-spacing:0.3px">Algorithm</div>
<div class="a" style="left:743px;top:193px;width:202px;height:78px;border:1px solid #dcdcdc"></div>
<div class="t" style="left:750px;top:187px;background:#fff;padding:0 2px">Check option for updates</div>
<svg style="left:350px;top:205px" width="14" height="14"><circle cx="6.5" cy="7" r="6" fill="#fff" stroke="#333"/><circle cx="6.5" cy="7" r="3.3" fill="#333"/></svg>
<div class="t" style="left:366px;top:206px;letter-spacing:-0.6px">UNDEFINED</div>
<svg style="left:350px;top:227px" width="14" height="14"><circle cx="6.5" cy="7" r="6" fill="#fff" stroke="#333"/></svg>
<div class="t" style="left:366px;top:228px;letter-spacing:-0.6px">MERGE</div>
<svg style="left:350px;top:249px" width="14" height="14"><circle cx="6.5" cy="7" r="6" fill="#fff" stroke="#333"/></svg>
<div class="t" style="left:366px;top:250px;letter-spacing:-0.6px">TEMPTABLE</div>
<svg style="left:751px;top:206px" width="14" height="14"><circle cx="6.5" cy="7" r="6" fill="#fff" stroke="#333"/><circle cx="6.5" cy="7" r="3.3" fill="#333"/></svg>
<div class="t" style="left:767px;top:206px;letter-spacing:0">None</div>
<svg style="left:751px;top:228px" width="14" height="14"><circle cx="6.5" cy="7" r="6" fill="#fff" stroke="#333"/></svg>
<div class="t" style="left:767px;top:228px;letter-spacing:-0.6px">CASCADED</div>
<svg style="left:751px;top:250px" width="14" height="14"><circle cx="6.5" cy="7" r="6" fill="#fff" stroke="#333"/></svg>
<div class="t" style="left:767px;top:250px;letter-spacing:-0.6px">LOCAL</div>
<div class="a" style="left:338px;top:282px;width:610px;height:204px;background:#fff;border:1px solid #7a7a7a;border-color:#828282"></div>
<div class="a" style="left:339px;top:283px;width:32px;height:202px;background:#f0f0f0"></div>
<div class="m" style="right:587px;top:285px;color:#707070">1</div>
<div class="m" style="left:374px;top:285px"><span class="kw">SELECT</span></div>
<div class="m" style="right:587px;top:300px;color:#707070">2</div>
<div class="m" style="left:374px;top:300px"><span class="id">c</span><span class="kw">.name</span> <span class="kw">AS</span> <span class="tb">category</span></div>
<div class="m" style="right:587px;top:315px;color:#707070">3</div>
<div class="m" style="left:374px;top:315px"><span class="sy">, </span><span class="fn">SUM</span><span class="id">(p.amount)</span> <span class="kw">AS</span> <span class="id">total_sales</span></div>
<div class="m" style="right:587px;top:330px;color:#707070">4</div>
<div class="m" style="left:374px;top:330px"><span class="kw">FROM</span> <span class="tb">payment</span> <span class="kw">AS</span> <span class="id">p</span></div>
<div class="m" style="right:587px;top:345px;color:#707070">5</div>
<div class="m" style="left:374px;top:345px"><span class="kw">INNER JOIN</span> <span class="tb">rental</span> <span class="kw">AS</span> <span class="id">r</span> <span class="kw">ON</span> <span class="id">p.rental_id</span><span class="sy"> = </span><span class="id">r.rental_id</span></div>
<div class="m" style="right:587px;top:360px;color:#707070">6</div>
<div class="m" style="left:374px;top:360px"><span class="kw">INNER JOIN</span> <span class="tb">inventory</span> <span class="kw">AS</span> <span class="id">i</span> <span class="kw">ON</span> <span class="id">r.inventory_id</span><span class="sy"> = </span><span class="id">i.inventory_id</span></div>
<div class="m" style="right:587px;top:375px;color:#707070">7</div>
<div class="m" style="left:374px;top:375px"><span class="kw">INNER JOIN</span> <span class="tb">film</span> <span class="kw">AS</span> <span class="id">f</span> <span class="kw">ON</span> <span class="id">i.film_id</span><span class="sy"> = </span><span class="id">f.film_id</span></div>
<div class="m" style="right:587px;top:390px;color:#707070">8</div>
<div class="m" style="left:374px;top:390px"><span class="kw">INNER JOIN</span> <span class="tb">film_category</span> <span class="kw">AS</span> <span class="id">fc</span> <span class="kw">ON</span> <span class="id">f.film_id</span><span class="sy"> = </span><span class="id">fc.film_id</span></div>
<div class="m" style="right:587px;top:405px;color:#707070">9</div>
<div class="m" style="left:374px;top:405px"><span class="kw">INNER JOIN</span> <span class="tb">category</span> <span class="kw">AS</span> <span class="id">c</span> <span class="kw">ON</span> <span class="id">fc.category_id</span><span class="sy"> = </span><span class="id">c.category_id</span></div>
<div class="m" style="right:587px;top:420px;color:#707070">10</div>
<div class="m" style="left:374px;top:420px"><span class="kw">GROUP BY</span> <span class="id">c</span><span class="kw">.name</span></div>
<div class="m" style="right:587px;top:435px;color:#707070">11</div>
<div class="m" style="left:374px;top:435px"><span class="kw">ORDER BY</span> <span class="id">total_sales</span> <span class="kw">DESC</span></div>
<div class="a" style="left:339px;top:492px;width:73px;height:23px;background:#e1e1e1;border:1px solid #adadad"></div>
<div class="t" style="left:339px;width:73px;text-align:center;top:497px;color:#000">Help</div>
<div class="a" style="left:420px;top:492px;width:73px;height:23px;background:#cccccc;border:1px solid #bfbfbf"></div>
<div class="t" style="left:420px;width:73px;text-align:center;top:497px;color:#838383">Discard</div>
<div class="a" style="left:498px;top:492px;width:73px;height:23px;background:#cccccc;border:1px solid #bfbfbf"></div>
<div class="t" style="left:498px;width:73px;text-align:center;top:497px;color:#838383">Save</div>
<svg style="left:341px;top:531px" width="7" height="7"><path d="M0.5 0.5l6 6M6.5 0.5l-6 6" stroke="#000" stroke-width="1.6"/></svg>
<div class="t" style="left:367px;top:530px;color:#a0a0a0;letter-spacing:-0.3px">Filter:</div>
<div class="a" style="left:401px;top:526px;width:154px;height:23px;background:#f0f0f0;border:1px solid #d9d9d9"></div>
<div class="a" style="left:1px;top:553px;width:955px;height:70px;background:#fff;border-top:1px solid #6a6a6a;border-bottom:1px solid #8a8a8a"></div>
<div class="a" style="left:2px;top:554px;width:32px;height:68px;background:#f0f0f0"></div>
<div class="m" style="right:923px;top:557px;color:#707070">23</div>
<div class="m" style="left:37px;top:557px;width:900px;overflow:hidden"><span class="kw">SELECT</span> <span class="sy">*</span> <span class="kw">FROM</span> <span class="id">information_schema</span><span class="sy">.</span><span class="id2">KEY_COLUMN_USAGE</span> <span class="kw">WHERE</span>   <span class="id2">TABLE_SCHEMA</span><span class="sy">=</span><span class="st">'sakila'</span>   <span class="kw">AND</span> <span class="fn">TABLE_NAME</span><span class="sy">=</span><span class="st">'sales_by_film_category'</span>   <span class="kw">AND</span> <span class="id2">REFERENCED_TABLE_NAME</span></div>
<div class="m" style="right:923px;top:572px;color:#707070">24</div>
<div class="m" style="left:37px;top:572px;width:900px;overflow:hidden"><span class="kw">SELECT</span> <span class="fn">CURRENT_USER</span><span class="sy">();</span></div>
<div class="m" style="right:923px;top:587px;color:#707070">25</div>
<div class="m" style="left:37px;top:587px;width:900px;overflow:hidden"><span class="kw">SHOW CREATE VIEW</span> <span class="id">`sakila`</span><span class="sy">.</span><span class="id">`sales_by_film_category`</span><span class="sy">;</span></div>
<div class="m" style="right:923px;top:602px;color:#707070">26</div>
<div class="m" style="left:37px;top:602px;width:900px;overflow:hidden"><span class="kw">SELECT</span> <span class="fn">CAST</span><span class="sy">(</span><span class="fn">LOAD_FILE</span><span class="sy">(</span><span class="fn">CONCAT</span><span class="sy">(</span><span class="fn">IFNULL</span><span class="sy">(</span><span class="fn">@@GLOBAL</span><span class="id">.datadir</span><span class="sy">, </span><span class="fn">CONCAT</span><span class="sy">(</span><span class="fn">@@GLOBAL</span><span class="id">.basedir</span><span class="sy">, </span><span class="st">'data/'</span><span class="sy">))</span><span class="sy">, </span><span class="st">'sakila/sales_by_film_category.frm'</span><span class="sy">))</span> <span class="kw">AS</span> <span class="id">PLAIN</span></div>
<div class="a" style="left:938px;top:554px;width:17px;height:68px;background:#f0f0f0"></div>
<svg style="left:941px;top:561px" width="10" height="7"><path d="M1 5.5L5 1.5L9 5.5" fill="none" stroke="#606060" stroke-width="1.6"/></svg>
<svg style="left:941px;top:609px" width="10" height="7"><path d="M1 1.5L5 5.5L9 1.5" fill="none" stroke="#606060" stroke-width="1.6"/></svg>
<div class="a" style="left:939px;top:587px;width:15px;height:17px;background:#cdcdcd"></div>
<div class="a" style="left:1px;top:623px;width:955px;height:19px;background:#f0f0f0"></div>
<div class="a" style="left:0;top:642px;width:957px;height:1px;background:#1f6098;z-index:5"></div>
<div class="a" style="left:275px;top:624px;width:1px;height:18px;background:#dadada"></div>
<div class="a" style="left:372px;top:624px;width:1px;height:18px;background:#dadada"></div>
<div class="a" style="left:518px;top:624px;width:1px;height:18px;background:#dadada"></div>
<div class="a" style="left:664px;top:624px;width:1px;height:18px;background:#dadada"></div>
<div class="a" style="left:761px;top:624px;width:1px;height:18px;background:#dadada"></div>
<svg style="left:280px;top:627px" width="14" height="14"><circle cx="7" cy="7" r="6.2" fill="#dfe9f5" stroke="#b0a890" stroke-width="1.2"/><circle cx="7" cy="7" r="4.6" fill="#fff"/><path d="M7 3.5V7l2.5-2" fill="none" stroke="#3a5a90" stroke-width="1.1"/></svg>
<div class="a" style="left:297px;top:623px;width:75px;height:19px;overflow:hidden"><div class="t" style="left:0;top:4px;letter-spacing:-0.1px">Connected: 00:00</div></div>
<svg style="left:376px;top:626px" width="16" height="16"><path d="M1 6l6 2 6-7-3 8 4 4-6-1-4 3 1-5z" fill="#f2dc6a" stroke="#c9a830" stroke-width="0.6"/><path d="M2 13l11-8" stroke="#7a5a3a" stroke-width="2.2"/></svg>
<div class="t" style="left:395px;top:627px;letter-spacing:-0.3px">MariaDB 10.3.12</div>
<div class="t" style="left:523px;top:627px;letter-spacing:-0.35px">Uptime: 10 days, 23:00 h</div>
<svg style="left:668px;top:625px" width="16" height="17"><circle cx="8" cy="9" r="6.3" fill="#fff" stroke="#3a80d0" stroke-width="1.8"/><path d="M8 5.5v3.5l2.5 1.5" fill="none" stroke="#333" stroke-width="1.2"/><circle cx="3" cy="3" r="2" fill="#f0b030"/><circle cx="13" cy="3" r="2" fill="#f0b030"/></svg>
<div class="a" style="left:686px;top:623px;width:75px;height:19px;overflow:hidden"><div class="t" style="left:0;top:4px;letter-spacing:-0.3px">Server time: 08:00</div></div>
<div class="a" style="left:770px;top:630px;width:6px;height:6px;border-radius:50%;background:#8ccf8c;border:1px solid #6ab86a"></div>
<div class="t" style="left:784px;top:627px">Idle.</div>
<div class="a" style="left:953px;top:631px;width:2px;height:2px;background:#b8b8b8"></div>
<div class="a" style="left:949px;top:635px;width:2px;height:2px;background:#b8b8b8"></div>
<div class="a" style="left:953px;top:635px;width:2px;height:2px;background:#b8b8b8"></div>
<div class="a" style="left:945px;top:639px;width:2px;height:2px;background:#b8b8b8"></div>
<div class="a" style="left:949px;top:639px;width:2px;height:2px;background:#b8b8b8"></div>
<div class="a" style="left:953px;top:639px;width:2px;height:2px;background:#b8b8b8"></div>
</body></html>
